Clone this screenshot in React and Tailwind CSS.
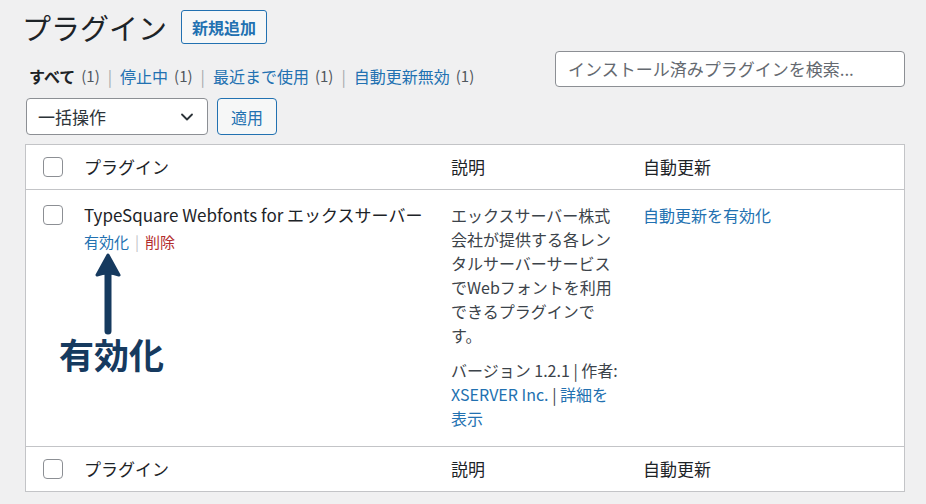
import { ChevronDown } from "lucide-react";

const font = { fontFamily: "'Noto Sans CJK JP', 'Noto Sans', sans-serif" };

function Checkbox() {
  return <div className="h-5 w-5 rounded-[4px] border border-[#8c8f94] bg-white" />;
}

function Filters() {
  const items = [
    { label: "すべて", count: 1, current: true },
    { label: "停止中", count: 1 },
    { label: "最近まで使用", count: 1 },
    { label: "自動更新無効", count: 1 },
  ];
  return (
    <ul className="flex items-center text-[16px] leading-6">
      {items.map((it, i) => (
        <li key={it.label} className="flex items-center">
          {i > 0 && <span className="mx-[8px] text-[#a7aaad]">|</span>}
          <span className={it.current ? "font-bold text-[#1d2327]" : "text-[#2271b1]"}>{it.label}</span>
          <span className="ml-[6px] text-[15px] text-[#50575e]">({it.count})</span>
        </li>
      ))}
    </ul>
  );
}

function HeaderRow({ top }) {
  return (
    <div className={`flex h-[45px] items-center text-[17px] text-[#1d2327] ${top ? "border-b" : "border-t"} border-[#c3c4c7]`}>
      <div className="w-[50px] pl-[17px]"><Checkbox /></div>
      <div className="w-[367px] pl-[8px]">プラグイン</div>
      <div className="w-[192px] pl-[8px]">説明</div>
      <div className="flex-1 pl-[8px]">自動更新</div>
    </div>
  );
}

export default function App() {
  return (
    <div className="min-h-[504px] bg-[#f0f0f1] pl-[25px] pr-[21px] text-[#3c434a]" style={font}>
      <div className="flex items-center pt-[9px]">
        <h1 className="-ml-[3px] text-[29px] leading-[36px] text-[#1d2327]">プラグイン</h1>
        <button className="ml-[14px] h-[34px] rounded-[3px] border border-[#2271b1] bg-[#f6f7f7] px-[10px] text-[16px] font-bold text-[#2271b1]">
          新規追加
        </button>
      </div>

      <div className="mt-[6px] flex items-start justify-between">
        <div className="pl-[4px] pt-[13px]">
          <Filters />
        </div>
        <div className="flex h-[36px] w-[350px] items-center rounded-[4px] border border-[#8c8f94] bg-white px-[12px] text-[17px] text-[#646970]">
          インストール済みプラグインを検索...
        </div>
      </div>

      <div className="mt-[10px] flex items-center gap-[9px] pl-[1px]">
        <div className="flex h-[37px] w-[182px] items-center justify-between rounded-[4px] border border-[#8c8f94] bg-white pl-[11px] pr-[10px] text-[17px] text-[#2c3338]">
          一括操作
          <ChevronDown size={20} strokeWidth={2.2} className="text-[#2c3338]" />
        </div>
        <button className="h-[37px] rounded-[4px] border border-[#2271b1] bg-[#f6f7f7] px-[13px] text-[16px] text-[#2271b1]">
          適用
        </button>
      </div>

      <div className="mt-[9px] w-[880px] border border-[#c3c4c7] bg-white">
        <HeaderRow top />
        <div className="relative flex h-[256px] text-[16px] leading-6">
          <div className="w-[50px] pl-[17px] pt-[15px]"><Checkbox /></div>
          <div className="w-[367px] pl-[8px] pt-[13px]">
            <div className="whitespace-nowrap text-[17px] text-[#1d2327]">TypeSquare Webfonts for エックスサーバー</div>
            <div className="mt-[3px] flex items-center text-[15px]">
              <span className="text-[#2271b1]">有効化</span>
              <span className="mx-[6px] text-[#c3c4c7]">|</span>
              <span className="text-[#b32d2e]">削除</span>
            </div>
          </div>
          <div className="w-[192px] pl-[8px] pt-[13px]">
            <p className="w-[170px] text-[#3c434a]">
              エックスサーバー株式会社が提供する各レンタルサーバーサービスでWebフォントを利用できるプラグインです。
            </p>
            <div className="mt-[11px] w-[170px] text-[#3c434a]">
              <div>バージョン 1.2.1 | 作者:</div>
              <div>
                <span className="text-[#2271b1]">XSERVER Inc.</span> | <span className="text-[#2271b1]">詳細を</span>
              </div>
              <div className="text-[#2271b1]">表示</div>
            </div>
          </div>
          <div className="flex-1 pl-[8px] pt-[13px] text-[#2271b1]">自動更新を有効化</div>

          <svg className="absolute left-[69px] top-[63px]" width="26" height="82" viewBox="0 0 26 82">
            <path d="M13 18 L13 78" stroke="#163a5f" strokeWidth="7" strokeLinecap="round" />
            <path d="M13 2 L24 22 Q13 18 2 22 Z" fill="#163a5f" stroke="#163a5f" strokeWidth="3" strokeLinejoin="round" />
          </svg>
          <div className="absolute left-[33px] top-[140px] text-[35px] font-bold leading-[48px] text-[#163a5f]">有効化</div>
        </div>
        <HeaderRow />
      </div>
    </div>
  );
}
